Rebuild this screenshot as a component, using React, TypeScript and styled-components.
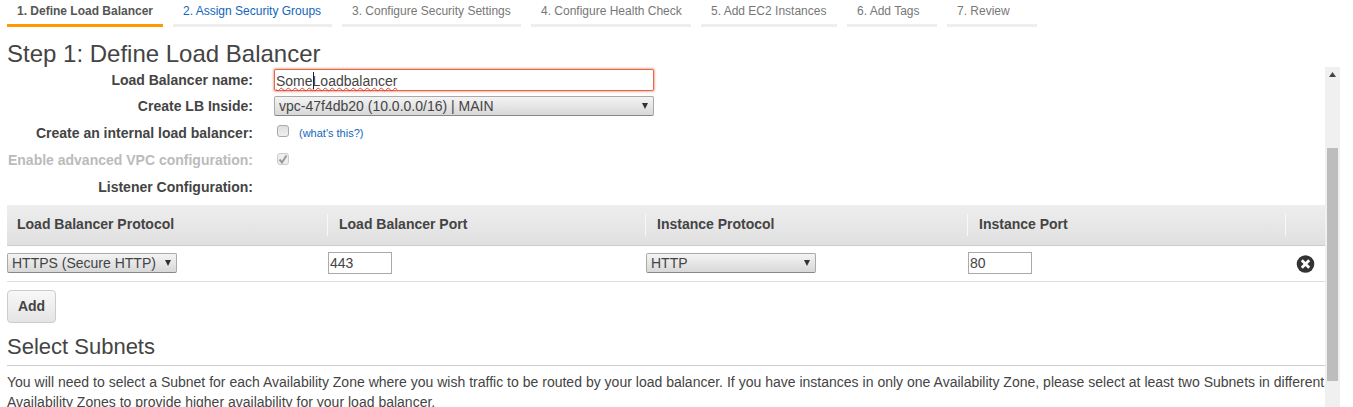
import React from "react";
import styled, { createGlobalStyle } from "styled-components";

const Global = createGlobalStyle`
  html, body { margin: 0; padding: 0; background: #fff; overflow: hidden; }
  body { font-family: "Liberation Sans", Arial, sans-serif; color: #444; font-size: 14px; }
`;
const Page = styled.div`
  width: 1353px; height: 407px; overflow: hidden; display: flex; flex-direction: column;
`;
const Tabs = styled.nav`
  display: flex; gap: 10px; padding-left: 7px; height: 27px; flex: none;
`;
const Tab = styled.a<{ $state: "active" | "link" | "off"; $w: number }>`
  width: ${p => p.$w}px; box-sizing: border-box; height: 27px; padding: 3px 0 0 10px;
  font-size: 12px; line-height: 16px;
  border-bottom: 3px solid ${p => (p.$state === "active" ? "#ff9900" : "#eeeeee")};
  color: ${p => (p.$state === "active" ? "#555" : p.$state === "link" ? "#1166bb" : "#777")};
  font-weight: ${p => (p.$state === "active" ? 700 : 400)};
`;
const Title = styled.h1`
  margin: 0; padding: 13px 0 0 7px; font-size: 24px; line-height: 27px; font-weight: 400; color: #444; flex: none; height: 40px; box-sizing: border-box;
`;
const Body = styled.div`
  flex: 1; min-height: 0; display: flex; width: 1340px;
`;
const Scroller = styled.main`
  width: 1318px; padding-left: 7px; overflow: hidden; flex: none;
`;
const Form = styled.div`
  display: grid; grid-template-columns: 246px 1fr; column-gap: 21px; grid-template-rows: 26px 26px 27px 27px 27px; align-items: center;
`;
const Label = styled.label<{ $off?: boolean }>`
  text-align: right; font-weight: 700; font-size: 14px; white-space: nowrap; color: ${p => (p.$off ? "#bbb" : "#444")};
`;
const NameBox = styled.div`
  position: relative; box-sizing: border-box; width: 380px; height: 22px; padding: 1px 0 0 1px; font-size: 14px; line-height: 20px; color: #444;
  border: 1px solid #e0694a; border-radius: 2px; box-shadow: 0 0 2px 1px rgba(230, 120, 90, 0.55);
  background: #fff;
`;
const Misspelt = styled.span`
  text-decoration: underline wavy #e83a3a 1px; text-underline-offset: 1px; text-decoration-skip-ink: none;
`;
const Caret = styled.i`
  position: absolute; top: 2px; width: 1px; height: 17px; background: #222;
`;
const SelectWrap = styled.div<{ $w: number; $inset?: boolean }>`
  position: relative; width: ${p => p.$w}px; height: 20px; ${p => p.$inset && "margin: 1px 0 0 1px;"}
  ${p => p.$w < 300 && !p.$inset && "margin-top: 1px;"}
  &::after {
    content: ""; position: absolute; right: 6px; top: 50%; margin-top: -3px;
    border-left: 3px solid transparent; border-right: 3px solid transparent; border-top: 6px solid #333;
  }
`;
const Select = styled.select`
  appearance: none; box-sizing: border-box; width: 100%; height: 100%; margin: 0; padding: 0 0 0 4px; display: block;
  font: 14px "Liberation Sans", Arial, sans-serif; color: #444; outline: none;
  border: 1px solid #aaa; border-bottom-color: #888; border-radius: 2px;
  background: linear-gradient(#f4f4f4, #d8d8d8);
`;
const CheckRow = styled.div`
  display: flex; align-items: center; gap: 10px; padding-left: 3px;
`;
const CheckWrap = styled.span<{ $low?: boolean }>`
  position: relative; display: block; width: 12px; height: 12px; margin-top: ${p => (p.$low ? -1 : -3)}px;
`;
const Check = styled.input`
  appearance: none; display: block; box-sizing: border-box; width: 12px; height: 12px; margin: 0;
  border: 1px solid ${p => (p.disabled ? "#ccc" : "#aaa")}; border-radius: 3px;
  background: ${p => (p.disabled ? "#eee" : "linear-gradient(#dedede, #f0f0f0)")};
`;
const Tick = styled.svg`
  position: absolute; left: 1px; top: 1px; width: 10px; height: 10px;
`;
const Help = styled.a`
  font-size: 11px; color: #1166bb;
`;
const Grid = styled.div`
  display: grid; grid-template-columns: 320px 318px 322px 318px 40px; width: 1318px;
`;
const HeadRow = styled(Grid)`
  height: 41px; margin-top: 5px; box-sizing: border-box; align-items: center; border-bottom: 1px solid #ccc;
  background: linear-gradient(#eeeeee, #e0e0e0);
`;
const HeadCell = styled.div<{ $first?: boolean }>`
  height: 22px; line-height: 20px; box-sizing: border-box; font-weight: 700; font-size: 14px; color: #444;
  padding-left: ${p => (p.$first ? 10 : 11)}px;
  border-left: ${p => (p.$first ? "none" : "1px solid #f8f8f8")};
`;
const BodyRow = styled(Grid)`
  height: 36px; box-sizing: border-box; align-items: start; border-bottom: 1px solid #ddd;
  padding-top: 6px;
`;
const Port = styled.input`
  box-sizing: border-box; width: 64px; height: 22px; margin: 0 0 0 1px; padding: 0 0 0 1px; display: block; outline: none;
  font: 14px "Liberation Sans", Arial, sans-serif; color: #444;
  border: 1px solid #aaa; background: #fff;
`;
const Cell = styled.div<{ $center?: boolean }>`
  display: flex; ${p => p.$center && "justify-content: center; padding: 2px 0 0 0;"}
`;
const Remove = styled.svg`
  width: 20px; height: 20px; display: block;
`;
const AddButton = styled.button`
  display: block; box-sizing: border-box; width: 49px; height: 33px; margin: 8px 0 0; padding: 0 0 2px;
  font: 700 14px "Liberation Sans", Arial, sans-serif; color: #444;
  border: 1px solid #ccc; border-radius: 4px; background: linear-gradient(#f8f8f8, #e4e4e4);
`;
const SubTitle = styled.h2`
  margin: 11px 0 0; font-size: 22px; line-height: 26px; font-weight: 400; color: #444; height: 31px; box-sizing: border-box;
`;
const Rule = styled.hr`
  margin: 0; border: 0; height: 1px; background: #ccc; width: 1318px;
`;
const Paragraph = styled.p`
  margin: 6px 0 0; font-size: 14px; line-height: 20px; color: #444; width: 1320px; word-spacing: 0.05px;
`;
const Bar = styled.div`
  width: 15px; flex: none; background: #f0f0f0; display: flex; flex-direction: column; align-items: center; overflow: hidden;
`;
const BarArrow = styled.svg`
  width: 7px; height: 5px; margin-top: 5px; flex: none; display: block;
`;
const Thumb = styled.div`
  width: 11px; height: 233px; margin-top: 71px; background: #bdbdbd; flex: none;
`;

const tabs: { t: string; s: "active" | "link" | "off"; w: number }[] = [
  { t: "1. Define Load Balancer", s: "active", w: 156 },
  { t: "2. Assign Security Groups", s: "link", w: 159 },
  { t: "3. Configure Security Settings", s: "off", w: 179 },
  { t: "4. Configure Health Check", s: "off", w: 160 },
  { t: "5. Add EC2 Instances", s: "off", w: 136 },
  { t: "6. Add Tags", s: "off", w: 90 },
  { t: "7. Review", s: "off", w: 90 },
];

export default function App() {
  return (
    <Page>
      <Global />
      <Tabs>
        {tabs.map(x => (
          <Tab key={x.t} $state={x.s} $w={x.w}>{x.t}</Tab>
        ))}
      </Tabs>
      <Title>Step 1: Define Load Balancer</Title>
      <Body>
        <Scroller>
          <Form>
            <Label>Load Balancer name:</Label>
            <NameBox role="textbox">
              <Misspelt>Some<Caret />Loadbalancer</Misspelt>
            </NameBox>
            <Label>Create LB Inside:</Label>
            <SelectWrap $w={380}>
              <Select defaultValue="vpc">
                <option value="vpc">vpc-47f4db20 (10.0.0.0/16) | MAIN</option>
              </Select>
            </SelectWrap>
            <Label>Create an internal load balancer:</Label>
            <CheckRow>
              <CheckWrap><Check type="checkbox" /></CheckWrap>
              <Help>(what's this?)</Help>
            </CheckRow>
            <Label $off>Enable advanced VPC configuration:</Label>
            <CheckRow>
              <CheckWrap $low>
                <Check type="checkbox" disabled />
                <Tick viewBox="0 0 10 10">
                  <path d="M1.5 5.5 L4 8.5 L8.5 1.5" fill="none" stroke="#999" strokeWidth="2" />
                </Tick>
              </CheckWrap>
            </CheckRow>
            <Label>Listener Configuration:</Label>
            <span />
          </Form>
          <HeadRow>
            <HeadCell $first>Load Balancer Protocol</HeadCell>
            <HeadCell>Load Balancer Port</HeadCell>
            <HeadCell>Instance Protocol</HeadCell>
            <HeadCell>Instance Port</HeadCell>
            <HeadCell />
          </HeadRow>
          <BodyRow>
            <Cell>
              <SelectWrap $w={170}>
                <Select defaultValue="https">
                  <option value="https">HTTPS (Secure HTTP)</option>
                </Select>
              </SelectWrap>
            </Cell>
            <Cell><Port readOnly value="443" /></Cell>
            <Cell>
              <SelectWrap $w={170} $inset>
                <Select defaultValue="http">
                  <option value="http">HTTP</option>
                </Select>
              </SelectWrap>
            </Cell>
            <Cell><Port readOnly value="80" /></Cell>
            <Cell $center>
              <Remove viewBox="0 0 20 20">
                <circle cx="10.5" cy="10" r="8.8" fill="#333" />
                <path d="M6.8 6.3 L14.2 13.7 M14.2 6.3 L6.8 13.7" stroke="#fff" strokeWidth="2.8" strokeLinecap="butt" />
              </Remove>
            </Cell>
          </BodyRow>
          <AddButton>Add</AddButton>
          <SubTitle>Select Subnets</SubTitle>
          <Rule />
          <Paragraph>
            You will need to select a Subnet for each Availability Zone where you wish traffic to be routed by your load balancer. If you have instances in only one Availability Zone, please select at least two Subnets in different Availability Zones to provide higher availability for your load balancer.
          </Paragraph>
        </Scroller>
        <Bar>
          <BarArrow viewBox="0 0 7 5"><path d="M3.5 0 L7 5 L0 5 Z" fill="#444" /></BarArrow>
          <Thumb />
        </Bar>
      </Body>
    </Page>
  );
}
